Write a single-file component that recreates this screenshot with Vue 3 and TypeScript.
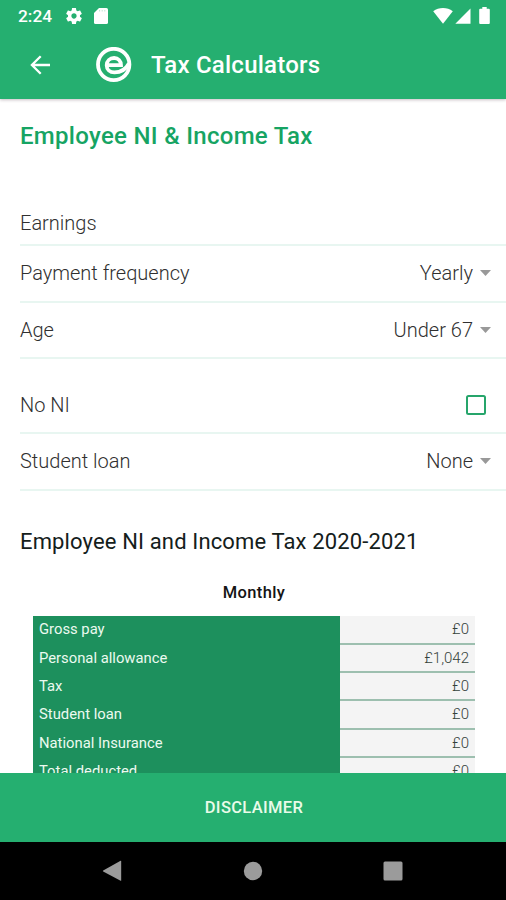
<script setup lang="ts">
interface Field {
  label: string
  value?: string
  kind: 'input' | 'select' | 'check'
  spaced?: boolean
}

interface ResultRow {
  label: string
  value: string
}

const fields: Field[] = [
  { label: 'Earnings', kind: 'input' },
  { label: 'Payment frequency', value: 'Yearly', kind: 'select' },
  { label: 'Age', value: 'Under 67', kind: 'select' },
  { label: 'No NI', kind: 'check', spaced: true },
  { label: 'Student loan', value: 'None', kind: 'select' },
]

const results: ResultRow[] = [
  { label: 'Gross pay', value: '£0' },
  { label: 'Personal allowance', value: '£1,042' },
  { label: 'Tax', value: '£0' },
  { label: 'Student loan', value: '£0' },
  { label: 'National Insurance', value: '£0' },
  { label: 'Total deducted', value: '£0' },
]
</script>

<template>
  <div class="screen">
    <header class="top">
      <div class="status">
        <span class="clock">2:24</span>
        <svg class="gear" viewBox="2 2 20 20" fill="currentColor">
          <path d="M19.43 12.98c.04-.32.07-.64.07-.98s-.03-.66-.07-.98l2.11-1.65c.19-.15.24-.42.12-.64l-2-3.46c-.12-.22-.39-.3-.61-.22l-2.49 1c-.52-.4-1.08-.73-1.69-.98l-.38-2.65C14.46 2.18 14.25 2 14 2h-4c-.25 0-.46.18-.49.42l-.38 2.65c-.61.25-1.17.59-1.69.98l-2.49-1c-.23-.09-.49 0-.61.22l-2 3.46c-.13.22-.07.49.12.64l2.11 1.65c-.04.32-.07.65-.07.98s.03.66.07.98l-2.11 1.65c-.19.15-.24.42-.12.64l2 3.46c.12.22.39.3.61.22l2.49-1c.52.4 1.08.73 1.69.98l.38 2.65c.03.24.24.42.49.42h4c.25 0 .46-.18.49-.42l.38-2.65c.61-.25 1.17-.59 1.69-.98l2.49 1c.23.09.49 0 .61-.22l2-3.46c.12-.22.07-.49-.12-.64l-2.11-1.65zM12 15.3c-1.82 0-3.3-1.48-3.3-3.3s1.48-3.3 3.3-3.3 3.3 1.48 3.3 3.3-1.48 3.3-3.3 3.3z" />
        </svg>
        <svg class="card" viewBox="0 0 14 16" fill="currentColor">
          <path d="M5 0h7.4Q14 0 14 1.6V14.4Q14 16 12.4 16H1.6Q0 16 0 14.4V5z" />
          <path class="notch" d="M5.6 2v1.5M8.2 2v1.5M10.8 2v1.5" />
        </svg>
        <span class="grow"></span>
        <svg class="wifi" viewBox="0 0 20 16" fill="currentColor">
          <path d="M.2 3.2C5.8-1 14.2-1 19.8 3.2L10 15.8z" />
        </svg>
        <svg class="signal" viewBox="0 0 16 16" fill="currentColor">
          <path d="M15.5.4V15.8H.3z" />
        </svg>
        <svg class="battery" viewBox="0 0 11 17" fill="currentColor">
          <path d="M3.3 0h4.4v1.7H9.8Q10.8 1.7 10.8 2.7V16Q10.8 17 9.8 17H1.2Q.2 17 .2 16V2.7Q.2 1.7 1.2 1.7H3.3z" />
        </svg>
      </div>
      <div class="appbar">
        <svg class="back" viewBox="0 0 21 20" fill="none" stroke="currentColor">
          <path d="M20 10H2M10.7 1.2L1.9 10l8.8 8.8" />
        </svg>
        <svg class="logo" viewBox="0 0 36 36" fill="none" stroke="currentColor">
          <circle cx="17.7" cy="17.5" r="15.7" />
          <path d="M11 18.2H25C25 13.8 22.2 11 18.1 11C13.8 11 10.7 14 10.7 18.2C10.7 22.4 13.8 25.4 18.5 25.4C25.5 25.4 30 22 33 16.5" />
        </svg>
        <h1>Tax Calculators</h1>
      </div>
    </header>

    <main class="content">
      <h2>Employee NI &amp; Income Tax</h2>
      <section class="form">
        <div v-for="field in fields" :key="field.label" class="field" :class="[field.kind, { spaced: field.spaced }]">
          <span>{{ field.label }}</span>
          <span v-if="field.kind === 'select'" class="choice">
            {{ field.value }}
            <svg class="caret" viewBox="0 0 11 6"><path d="M0 0h11L5.5 6z" fill="currentColor" /></svg>
          </span>
          <span v-else-if="field.kind === 'check'" class="box" role="checkbox" aria-checked="false"></span>
        </div>
      </section>

      <h3>Employee NI and Income Tax 2020-2021</h3>
      <p class="period">Monthly</p>
      <section class="table">
        <div v-for="row in results" :key="row.label" class="row">
          <span class="name">{{ row.label }}</span>
          <span class="amount">{{ row.value }}</span>
        </div>
      </section>
    </main>

    <button class="disclaimer" type="button">DISCLAIMER</button>

    <nav class="system">
      <svg viewBox="0 0 20 22" class="nav-back"><path d="M19.2 1V20.5Q19.2 21 18.6 20.7L1.2 11.5Q.4 11 1.2 10.5L18.6.8Q19.2.5 19.2 1z" /></svg>
      <svg viewBox="0 0 20 20" class="nav-home"><circle cx="10" cy="10" r="9.2" /></svg>
      <svg viewBox="0 0 20 20" class="nav-recent"><rect x=".5" y=".5" width="19" height="19" rx="1.5" /></svg>
    </nav>
  </div>
</template>

<style>
body {
  margin: 0;
  overflow: hidden;
}
</style>

<style scoped>
.screen {
  display: flex;
  flex-direction: column;
  width: 506px;
  height: 900px;
  overflow: hidden;
  background: #fff;
  font-family: Roboto, "Liberation Sans", sans-serif;
  color: #303030;
}

.top {
  flex: none;
  height: 99px;
  background: #25af70;
  color: #fff;
  box-shadow: 0 1px 3px rgba(70, 40, 60, 0.3);
}

.status {
  display: flex;
  align-items: center;
  height: 31px;
  padding: 0 16px 0 18px;
}

.clock {
  width: 48px;
  font-size: 17.3px;
  font-weight: 500;
  line-height: 32px;
}

.gear {
  width: 16px;
  height: 16px;
}

.card {
  width: 14px;
  height: 16px;
  margin-left: 12px;
}

.notch {
  stroke: #bfe6d2;
  stroke-width: 1;
}

.grow {
  flex: 1;
}

.wifi {
  width: 20px;
  height: 16px;
}

.signal {
  width: 16px;
  height: 16px;
  margin-left: 2px;
}

.battery {
  width: 11px;
  height: 17px;
  margin-left: 8px;
}

.appbar {
  display: flex;
  align-items: center;
  height: 67px;
  padding-left: 30px;
}

.back {
  width: 21px;
  height: 20px;
  stroke-width: 2.3;
}

.logo {
  width: 36px;
  height: 36px;
  margin-left: 45px;
  stroke-width: 3.8;
}

h1 {
  margin: 0 0 0 19px;
  font-size: 24px;
  font-weight: 500;
  line-height: 28px;
  letter-spacing: 0.23px;
}

.content {
  flex: 1;
  min-height: 0;
  overflow: hidden;
}

h2 {
  margin: 21px 0 0 20px;
  font-size: 24px;
  font-weight: 500;
  line-height: 32px;
  letter-spacing: 0.3px;
  color: #16a463;
}

.form {
  padding: 49px 0 0 20px;
}

.field {
  display: flex;
  align-items: center;
  justify-content: space-between;
  box-sizing: border-box;
  height: 56.5px;
  padding: 0 15px 0 0;
  border-bottom: 2px solid #e8f6f1;
  font-size: 20px;
  font-weight: 300;
}

.input {
  height: 45px;
}

.spaced {
  height: 75.2px;
  padding: 19px 20px 0 0;
}

.choice {
  display: flex;
  align-items: center;
  gap: 7px;
}

.caret {
  width: 11px;
  height: 6px;
  color: #999;
}

.box {
  box-sizing: border-box;
  width: 20px;
  height: 20px;
  border: 2px solid #26a56b;
  border-radius: 2.5px;
}

h3 {
  margin: 34.4px 0 0 20px;
  font-size: 22px;
  font-weight: 400;
  line-height: 34px;
  letter-spacing: 0.14px;
  color: #14201b;
}

.period {
  margin: 21.6px 0 0;
  padding-left: 2px;
  font-size: 16.5px;
  font-weight: 500;
  line-height: 24px;
  letter-spacing: 0.4px;
  text-align: center;
  color: #151515;
}

.table {
  margin: 11.7px 31px 0 33px;
}

.row {
  display: flex;
  height: 28.3px;
  font-size: 15px;
  line-height: 27px;
}

.name {
  width: 301px;
  padding-left: 6px;
  background: #1d905d;
  font-size: 14.8px;
  font-weight: 400;
  color: #ecfaf0;
}

.amount {
  flex: 1;
  box-sizing: border-box;
  padding-right: 6px;
  border-bottom: 2px solid #9dbfaf;
  background: #f4f4f4;
  text-align: right;
  font-weight: 300;
  color: #34423b;
}

.disclaimer {
  flex: none;
  height: 69px;
  padding: 0 0 0 2px;
  border: 0;
  background: #25af70;
  font: 500 16.5px/68px Roboto, "Liberation Sans", sans-serif;
  letter-spacing: 0.35px;
  color: #eafbe9;
}

.system {
  display: flex;
  flex: none;
  align-items: center;
  height: 58px;
  padding-left: 102px;
  background: #000;
  fill: #9b9b9b;
}

.nav-back {
  width: 20px;
  height: 22px;
}

.nav-home {
  width: 20px;
  height: 20px;
  margin-left: 121px;
}

.nav-recent {
  width: 20px;
  height: 20px;
  margin-left: 120px;
}
</style>
